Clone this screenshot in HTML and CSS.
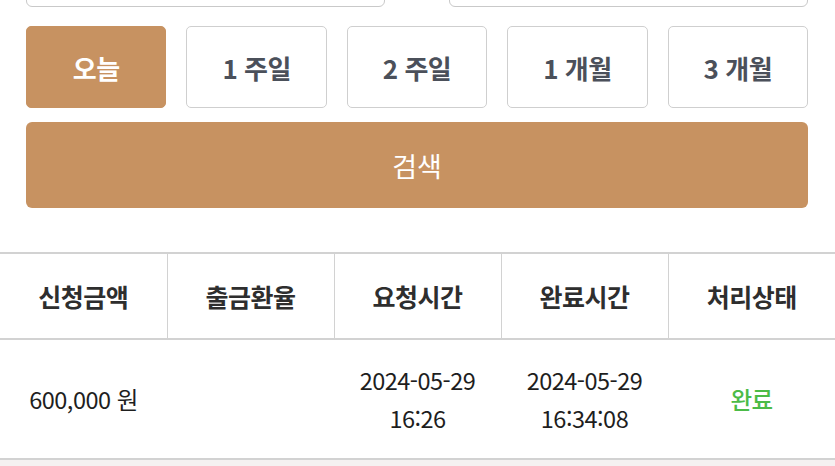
FILE: index.html
```html
<!DOCTYPE html>
<html lang="ko">
<head>
  <meta charset="UTF-8">
  <meta name="viewport" content="width=device-width, initial-scale=1.0">
  <title>출금내역</title>
  <link rel="stylesheet" href="styles.css">
</head>
<body>

  <div class="search-box">
    <!-- Date range inputs (scrolled partly out of view) -->
    <div class="date-range">
      <input type="text" class="date-input" value="">
      <input type="text" class="date-input" value="">
    </div>

    <div class="period-buttons">
      <button class="period active">오늘</button>
      <button class="period">1 주일</button>
      <button class="period">2 주일</button>
      <button class="period">1 개월</button>
      <button class="period">3 개월</button>
    </div>

    <button class="search-btn">검색</button>
  </div>

  <table class="history">
    <thead>
      <tr>
        <th>신청금액</th>
        <th>출금환율</th>
        <th>요청시간</th>
        <th>완료시간</th>
        <th>처리상태</th>
      </tr>
    </thead>
    <tbody>
      <tr>
        <td>600,000 원</td>
        <td></td>
        <td>2024-05-29<br>16:26</td>
        <td>2024-05-29<br>16:34:08</td>
        <td class="status-done">완료</td>
      </tr>
    </tbody>
  </table>

  <div class="footer-space"></div>

</body>
</html>
```

FILE: styles.css
```css
body {
  font-family: "Noto Sans CJK KR", "Noto Sans", sans-serif;
  background-color: #fff;
  margin: 0;
  padding: 0;
  overflow: hidden;
}

.search-box {
  padding: 0 27px 0 26px;
}

.date-range {
  display: flex;
  justify-content: space-between;
  margin-top: -42px;
}

.date-input {
  width: 359px;
  height: 49px;
  box-sizing: border-box;
  border: 1px solid #c9c9c9;
  border-radius: 6px;
  background: #fff;
}

.period-buttons {
  display: flex;
  gap: 20px;
  margin-top: 19px;
}

.period {
  flex: 1;
  height: 82px;
  background: #fff;
  border: 1px solid #cfcfcf;
  border-radius: 5px;
  font-family: inherit;
  font-size: 26px;
  font-weight: 700;
  letter-spacing: -0.5px;
  color: #4b505a;
  cursor: pointer;
}

.period.active {
  background-color: #c79261;
  border-color: #c79261;
  color: #fff;
}

.search-btn {
  display: block;
  width: 100%;
  height: 86px;
  margin-top: 14px;
  background-color: #c79261;
  border: none;
  border-radius: 6px;
  font-family: inherit;
  font-size: 27px;
  color: #fff;
  cursor: pointer;
}

/* Result table */
.history {
  width: 100%;
  margin-top: 44px;
  border-collapse: collapse;
  table-layout: fixed;
}

.history th {
  height: 82px;
  border-top: 2px solid #d2d2d2;
  border-bottom: 2px solid #d2d2d2;
  border-left: 1px solid #d2d2d2;
  font-size: 25px;
  font-weight: 700;
  letter-spacing: -0.5px;
  color: #2e2e2e;
}

.history th:first-child {
  border-left: none;
}

.history td {
  height: 118px;
  text-align: center;
  font-size: 23.5px;
  line-height: 38px;
  letter-spacing: -0.5px;
  color: #1e1e1e;
  border-bottom: 2px solid #d2d2d2;
  padding: 0;
}

.status-done {
  color: #4cbb47 !important;
  font-weight: 500;
}

.footer-space {
  height: 40px;
  background-color: #f5f1f1;
}
```
